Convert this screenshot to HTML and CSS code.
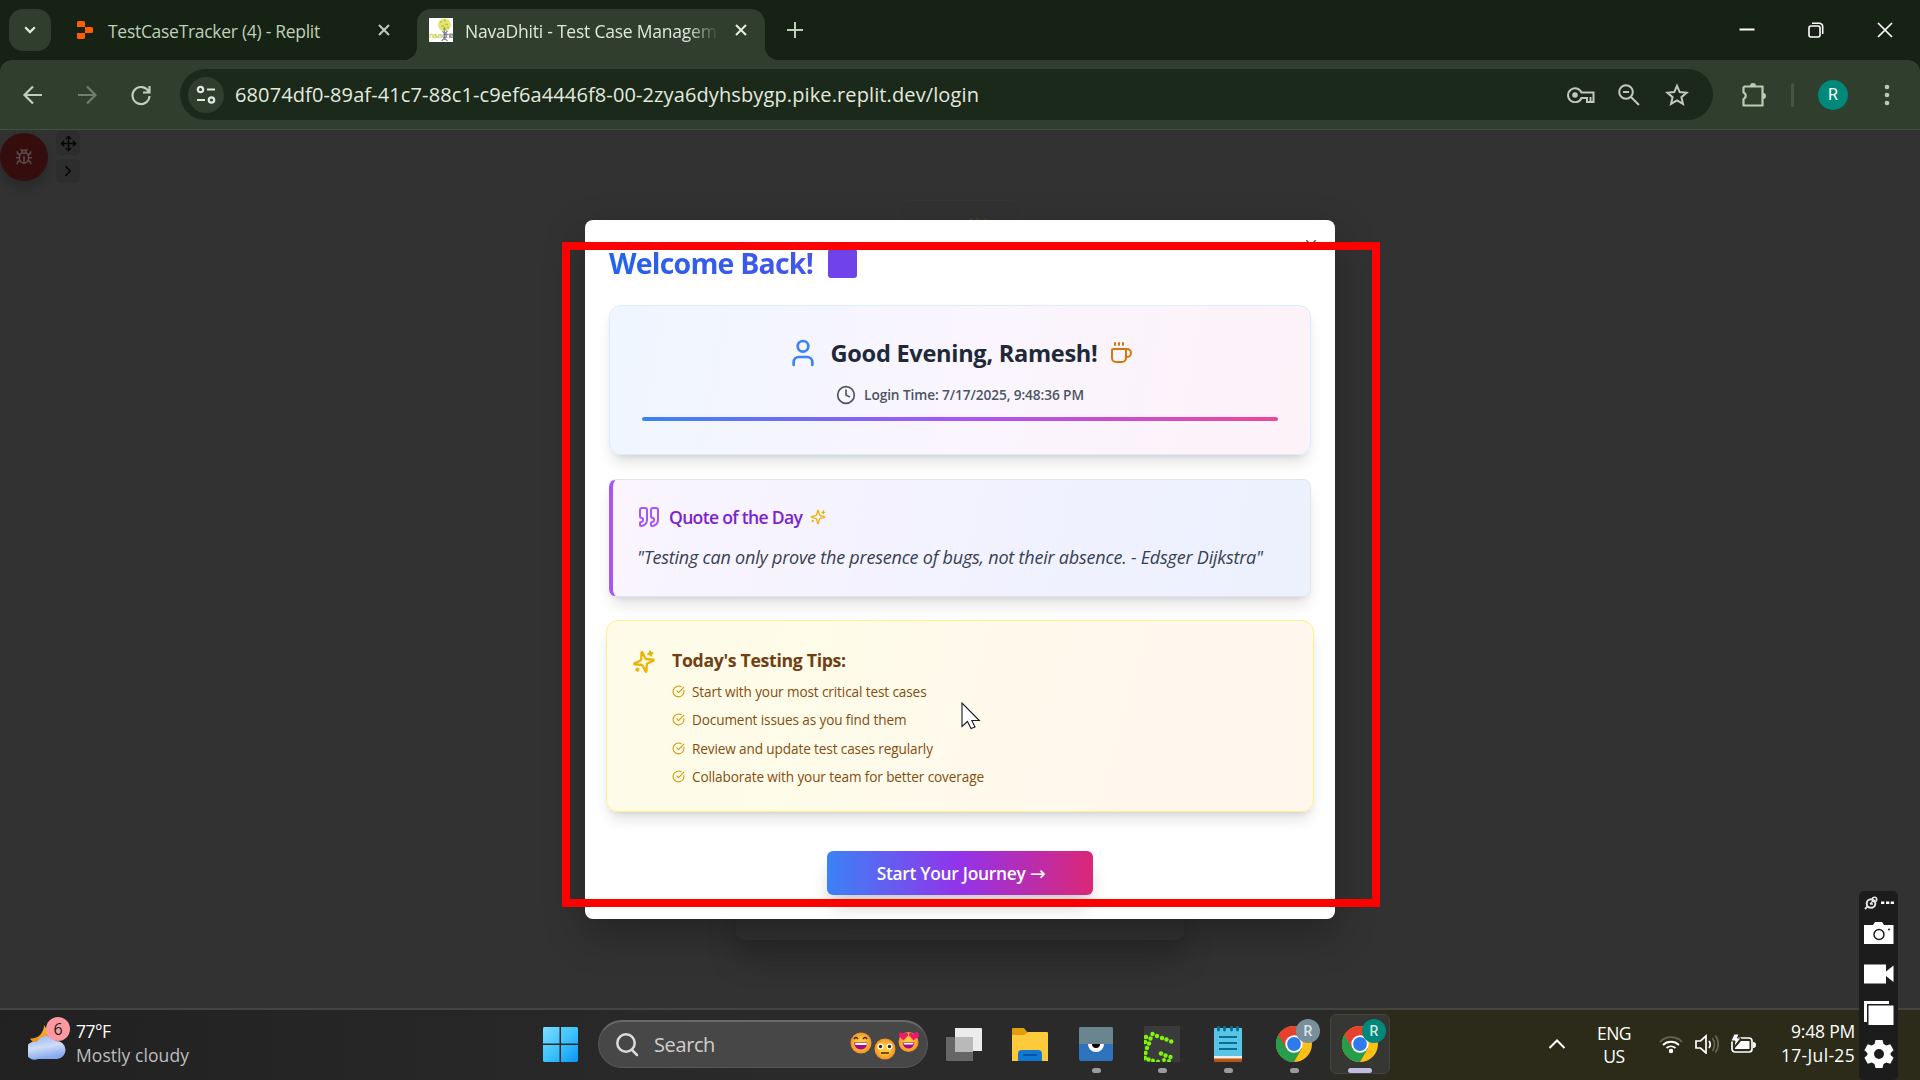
FILE: index.html
```html
<!DOCTYPE html>
<html lang="en">
<head>
<meta charset="utf-8">
<title>NavaDhiti - Test Case Management</title>
<link rel="stylesheet" href="styles.css">
</head>
<body>
<div class="screen">
  <header class="tabstrip">
    <button class="tab-search"><svg width="12" height="8" viewBox="0 0 12 8"><path d="M1.200 1.200 6 6l4.800-4.800" fill="none" stroke="#dfeadb" stroke-width="2.300"/></svg></button>
    <div class="tab">
      <svg class="replit" width="16" height="18" viewBox="0 0 16 18"><path fill="#ff5f00" d="M0 1.500Q0 0 1.500 0H6.500Q8 0 8 1.500V6H0zM8 6h6.500Q16 6 16 7.500v3Q16 12 14.500 12H8zM0 12h8v4.500Q8 18 6.500 18h-5Q0 18 0 16.500z"/></svg>
      <span class="tab-title t-first">TestCaseTracker (4) - Replit</span>
      <svg class="x" width="12" height="12" viewBox="0 0 12 12"><path d="M1 1l10 10M11 1 1 11"/></svg>
    </div>
    <div class="tab active">
      <svg width="24" height="24" viewBox="0 0 24 24"><path fill="#fff" d="M0 0h24v24H0z"/><circle cx="15.500" cy="7" r="6.500" fill="#dfe67e"/><path d="M11 4h2M15 2.500h2M12 8h3M16 6.500h3M14 11h3M18 9.500h2" stroke="#bccb12" stroke-width="1.500"/><path d="M15.500 9v13m0-6-2-3m2 3 3-3m-6 10 3-3 3 3" stroke="#8a8a94" stroke-width="1.200" fill="none"/><text x="0" y="19.500" font-size="8" textLength="13" class="fav" fill="#b9c61d">nava</text><text x="13" y="19.500" font-size="8" textLength="11" class="fav" fill="#666a80">dhiti</text></svg>
      <span class="tab-title">NavaDhiti - Test Case Managem</span>
      <svg class="x" width="12" height="12" viewBox="0 0 12 12"><path d="M1 1l10 10M11 1 1 11"/></svg>
    </div>
    <svg class="plus" width="16" height="16" viewBox="0 0 16 16"><path d="M8 0v16M0 8h16" stroke="#bdd0b8" stroke-width="2"/></svg>
    <div class="winctl">
      <svg width="16" height="16" viewBox="0 0 16 16"><path d="M.500 7.500h15" stroke="#fff" stroke-width="2"/></svg>
      <svg width="16" height="16" viewBox="0 0 16 16" fill="none" stroke="#fff" stroke-width="1.600"><rect x="1" y="4" width="11" height="11" rx="2"/><path d="M4 1.300h7q3.700 0 3.700 3.700v7"/></svg>
      <svg width="16" height="16" viewBox="0 0 16 16"><path d="M1 1l14 14M15 1 1 15" stroke="#fff" stroke-width="1.700"/></svg>
    </div>
  </header>

  <div class="toolbar-wrap">
  <nav class="toolbar">
    <svg class="nav-ic" width="24" height="24" viewBox="0 0 24 24"><path d="M21 12H4M12 3.500 3.500 12l8.500 8.500"/></svg>
    <svg class="nav-ic dim" width="24" height="24" viewBox="0 0 24 24"><path d="M3 12h17M12 3.500l8.500 8.500-8.500 8.500"/></svg>
    <svg class="nav-ic" width="24" height="24" viewBox="0 0 24 24"><path d="M19.500 8.500A8.500 8.500 0 1 0 20.500 13M20.500 3v6.500H14"/></svg>
    <div class="omnibox">
      <span class="site"><svg width="20" height="20" viewBox="0 0 20 20" fill="none" stroke="#dfe8dc" stroke-width="2.200"><circle cx="4.500" cy="4.500" r="2.700"/><path d="M11 4.500h8M1 15h8"/><circle cx="15.500" cy="15" r="2.700"/></svg></span>
      <span class="url">68074df0-89af-41c7-88c1-c9ef6a4446f8-00-2zya6dyhsbygp.pike.replit.dev/login</span>
      <svg class="key" width="28" height="16" viewBox="0 0 28 16" fill="none" stroke="#c3c8bd" stroke-width="2"><path d="M14.500 5.500H26.500V15H20v-4h-5.500A7 7 0 1 1 14.500 5.500z"/><path d="M23.500 10v4"/><circle cx="8" cy="8" r="2.800" fill="#c3c8bd" stroke="none"/></svg>
      <svg class="mag" width="22" height="22" viewBox="0 0 22 22" fill="none" stroke="#c3c8bd" stroke-width="2"><circle cx="8" cy="8" r="6.800"/><path d="M13 13l8 8M5 8h6"/></svg>
      <svg class="star" width="24" height="23" viewBox="0 0 24 23" fill="none" stroke="#c3c8bd" stroke-width="2"><path d="M12 2.800l2.700 6.300 6.900.6-5.200 4.500 1.600 6.700-6-3.600-6 3.600 1.600-6.700L2.400 9.700l6.900-.6z"/></svg>
    </div>
    <svg class="puzzle" width="26" height="26" viewBox="0 0 26 26"><path d="M3.500 4.500H21.500V23.500H2.500V17a3.500 3.500 0 0 0 0-6.500V5.500z" fill="none" stroke="#b9cdb3" stroke-width="2.200" stroke-linejoin="round"/><path d="M9 4a3 3 0 0 1 6 0zM22 11a3 3 0 0 1 0 6z" fill="#b9cdb3"/></svg>
    <span class="sep"></span>
    <span class="avatar">R</span>
    <svg class="dots" width="6" height="22" viewBox="0 0 6 22" fill="#b9cdb3"><circle cx="3" cy="3" r="2.300"/><circle cx="3" cy="11" r="2.300"/><circle cx="3" cy="19" r="2.300"/></svg>
  </nav>
  </div>

  <main class="page">
    <div class="logo-box"></div>
    <svg class="leaf" width="20" height="4" viewBox="0 0 20 4" fill="#4c4c00"><path d="M1 3l3-2v3zM8 0l4 4H9zM16 1l3 2-2 1z"/></svg>
    <div class="login-card"></div>
    <div class="bugbar">
      <span class="bug"><svg width="18" height="18" viewBox="0 0 24 24" class="stroke" stroke="#5f4a4a"><path d="m8 2 1.880 1.880M14.120 3.880 16 2M9 7.130v-1a3.003 3.003 0 1 1 6 0v1M12 20c-3.300 0-6-2.700-6-6v-3a4 4 0 0 1 4-4h4a4 4 0 0 1 4 4v3c0 3.300-2.700 6-6 6M12 20v-9M6.530 9C4.600 8.800 3 7.100 3 5M6 13H2M3 21c0-2.100 1.700-3.900 3.800-4M20.970 5c0 2.100-1.600 3.800-3.500 4M22 13h-4M17.200 17c2.100.1 3.800 1.900 3.800 4"/></svg></span>
      <div class="bug-side">
        <span class="mini"><svg width="17" height="17" viewBox="0 0 24 24" class="stroke" stroke="#050505"><path d="M12 2v20M15 19l-3 3-3-3M19 9l3 3-3 3M2 12h20M5 9l-3 3 3 3M9 5l3-3 3 3"/></svg></span>
        <span class="mini"><svg width="18" height="18" viewBox="0 0 24 24" class="stroke" stroke="#050505"><path d="m9 18 6-6-6-6"/></svg></span>
      </div>
    </div>

    <section class="modal">
      <svg class="close" width="16" height="16" viewBox="0 0 24 24" fill="none" stroke="#555" stroke-width="2"><path d="M5 5l14 14M19 5 5 19"/></svg>
      <h1 class="title"><span>Welcome Back!</span><i class="tofu"></i></h1>
      <article class="card greet">
        <div class="row hello">
          <svg width="32" height="32" viewBox="0 0 24 24" class="stroke" stroke="#3b82f6"><path d="M19 21v-2a4 4 0 0 0-4-4H9a4 4 0 0 0-4 4v2"/><circle cx="12" cy="7" r="4"/></svg>
          <h2>Good Evening, Ramesh!</h2>
          <svg width="24" height="24" viewBox="0 0 24 24" class="stroke" stroke="#d97706"><path d="M10 2v2M14 2v2M16 8a1 1 0 0 1 1 1v8a4 4 0 0 1-4 4H7a4 4 0 0 1-4-4V9a1 1 0 0 1 1-1h14a4 4 0 1 1 0 8h-1M6 2v2"/></svg>
        </div>
        <div class="row when">
          <svg width="20" height="20" viewBox="0 0 24 24" class="stroke" stroke="#4b5563"><circle cx="12" cy="12" r="10"/><path d="M12 6v6l4 2"/></svg>
          <span>Login Time: 7/17/2025, 9:48:36 PM</span>
        </div>
        <div class="bar"></div>
      </article>
      <article class="card quote">
        <div class="row qhead">
          <svg width="24" height="24" viewBox="0 0 24 24" class="stroke" stroke="#a855f7"><path d="M16 3a2 2 0 0 0-2 2v6a2 2 0 0 0 2 2 1 1 0 0 1 1 1v1a2 2 0 0 1-2 2 1 1 0 0 0-1 1v2a1 1 0 0 0 1 1 6 6 0 0 0 6-6V5a2 2 0 0 0-2-2zM5 3a2 2 0 0 0-2 2v6a2 2 0 0 0 2 2 1 1 0 0 1 1 1v1a2 2 0 0 1-2 2 1 1 0 0 0-1 1v2a1 1 0 0 0 1 1 6 6 0 0 0 6-6V5a2 2 0 0 0-2-2z"/></svg>
          <h3>Quote of the Day</h3>
          <svg width="16" height="16" viewBox="0 0 24 24" class="stroke" stroke="#eab308"><path d="M9.937 15.500A2 2 0 0 0 8.500 14.063l-6.135-1.582a.5.5 0 0 1 0-.962L8.500 9.936A2 2 0 0 0 9.937 8.500l1.582-6.135a.5.5 0 0 1 .963 0L14.063 8.500A2 2 0 0 0 15.500 9.937l6.135 1.581a.5.5 0 0 1 0 .964L15.500 14.063a2 2 0 0 0-1.437 1.437l-1.582 6.135a.5.5 0 0 1-.963 0zM20 3v4M22 5h-4M4 17v2M5 18H3"/></svg>
        </div>
        <p class="qtext">"Testing can only prove the presence of bugs, not their absence. - Edsger Dijkstra"</p>
      </article>
      <article class="card tips">
        <svg class="spark" width="24" height="24" viewBox="0 0 24 24" stroke="#eab308"><path d="M9.937 15.500A2 2 0 0 0 8.500 14.063l-6.135-1.582a.5.5 0 0 1 0-.962L8.500 9.936A2 2 0 0 0 9.937 8.500l1.582-6.135a.5.5 0 0 1 .963 0L14.063 8.500A2 2 0 0 0 15.500 9.937l6.135 1.581a.5.5 0 0 1 0 .964L15.500 14.063a2 2 0 0 0-1.437 1.437l-1.582 6.135a.5.5 0 0 1-.963 0zM20 3v4M22 5h-4M4 17v2M5 18H3"/></svg>
        <div class="tips-body">
          <h3>Today's Testing Tips:</h3>
          <ul>
            <li><svg width="13" height="13" viewBox="0 0 24 24" class="stroke" stroke="#d19a0b"><path d="M21.801 10A10 10 0 1 1 17 3.335M9 11l3 3L22 4"/></svg><span>Start with your most critical test cases</span></li>
            <li><svg width="13" height="13" viewBox="0 0 24 24" class="stroke" stroke="#d19a0b"><path d="M21.801 10A10 10 0 1 1 17 3.335M9 11l3 3L22 4"/></svg><span>Document issues as you find them</span></li>
            <li><svg width="13" height="13" viewBox="0 0 24 24" class="stroke" stroke="#d19a0b"><path d="M21.801 10A10 10 0 1 1 17 3.335M9 11l3 3L22 4"/></svg><span>Review and update test cases regularly</span></li>
            <li><svg width="13" height="13" viewBox="0 0 24 24" class="stroke" stroke="#d19a0b"><path d="M21.801 10A10 10 0 1 1 17 3.335M9 11l3 3L22 4"/></svg><span>Collaborate with your team for better coverage</span></li>
          </ul>
        </div>
      </article>
      <button class="cta">Start Your Journey <span class="arrow">→</span></button>
    </section>
    <svg class="cursor" width="20" height="28" viewBox="0 0 20 28"><path d="M1 1v23.500l5.500-5 3.500 7 4-1.500-3.200-6.500h7.500z" fill="#fff" stroke="#1a1a2a" stroke-width="1.100"/></svg>
    <div class="highlight"></div>
  </main>

  <footer class="taskbar">
    <div class="weather">
      <svg width="48" height="44" viewBox="0 0 48 44"><defs><linearGradient id="mo" x2="0" y2="1"><stop stop-color="#f9b932"/><stop offset="1" stop-color="#f08a1c"/></linearGradient><linearGradient id="cl" x2=".3" y2="1"><stop stop-color="#8fb4f5"/><stop offset=".55" stop-color="#cfdcf6"/><stop offset="1" stop-color="#86aaf0"/></linearGradient></defs><path d="M16 9a13 13 0 0 1-14 13.500C5 29 18 30 22 20z" fill="url(#mo)"/><path d="M10 43a9 9 0 1 1-1-17 11 11 0 0 1 19-1 9 9 0 1 1 1 18z" fill="url(#cl)"/><circle cx="30" cy="13" r="12" fill="#ff99a1"/><text x="30" y="18.500" text-anchor="middle" font-size="16" class="sans" fill="#1c1c1c">6</text></svg>
      <div class="wtext"><span class="w1">77°F</span><span class="w2">Mostly cloudy</span></div>
    </div>
    <svg class="win" width="35" height="35" viewBox="0 0 35 35"><defs><linearGradient id="wg" x2="1" y2="1"><stop stop-color="#7fdcff"/><stop offset=".5" stop-color="#3fc4fb"/><stop offset="1" stop-color="#0a95f7"/></linearGradient></defs><path fill="url(#wg)" d="M1 0h15.500v16.500H0V1zM18 0h16l1 1v15.500H18zM0 18h16.500v17H1l-1-1zM18 18h17v16l-1 1H18z"/></svg>
    <div class="search">
      <svg width="24" height="24" viewBox="0 0 24 24" fill="none" stroke="#dcdcdc" stroke-width="2.500" stroke-linecap="round"><circle cx="11" cy="10" r="8.700"/><path d="M17 17l5 5"/></svg>
      <span class="stext">Search</span>
      <svg class="emoji" width="70" height="30" viewBox="0 0 70 30"><defs><radialGradient id="em"><stop offset=".4" stop-color="#ffc83a"/><stop offset="1" stop-color="#f59224"/></radialGradient></defs><circle cx="12" cy="13" r="10.500" fill="url(#em)"/><path d="M5 9q2-3 4 0M14 9q2-3 4 0" stroke="#42210b" stroke-width="1.500" fill="none"/><path d="M5 12.500h13.500q-1 7-6.700 7t-6.800-7z" fill="#a80a8a"/><path d="M6 13h12l-.5 2H6.500z" fill="#fff"/><circle cx="36" cy="19" r="10.500" fill="url(#em)"/><circle cx="31.500" cy="16.500" r="3" fill="#fff"/><circle cx="40.500" cy="16.500" r="3" fill="#fff"/><circle cx="31.500" cy="16.500" r="1.700" fill="#42210b"/><circle cx="40.500" cy="16.500" r="1.700" fill="#42210b"/><path d="M32 23h8" stroke="#42210b" stroke-width="1.500"/><circle cx="59.500" cy="12" r="10" fill="url(#em)"/><path d="M54.500 10.500 50 6q-1-4 2.500-3.500l2 1.500q5-3 4.500 1.500zM64.500 10.500 60 5.500q0-4.500 4-1.500 5-4 5.500 0t-2 4z" fill="#f2186b"/><path d="M53.500 12.500h12q-1 6-6 6t-6-6z" fill="#a80a8a"/><path d="M54.500 13h10l-.5 1.500h-9z" fill="#fff"/></svg>
    </div>
    <div class="apps">
      <span class="app"><svg width="36" height="36" viewBox="0 0 36 36"><path d="M9 2h26q1 0 1 1v22H9z" fill="#ececec"/><path d="M0 11h27v24H1l-1-1z" fill="#666"/><path d="M9 11h18v15H9z" fill="#b9b9b9"/></svg></span>
      <span class="app"><svg width="36" height="36" viewBox="0 0 36 36"><path d="M0 3q0-1 1-1h11l4 5v5H0z" fill="#e09d0c"/><path d="M0 9h12l4-3h19q1 0 1 1v28H0z" fill="#fdca3b"/><path d="M6 35V28q0-4 4-4h16q4 0 4 4v7z" fill="#0e78d4"/><path d="M11 29h14" stroke="#0a4c91" stroke-width="1.600"/></svg></span>
      <span class="app"><svg width="36" height="36" viewBox="0 0 36 36"><rect x="1" y="1" width="34" height="34" rx="2" fill="#2e74bd"/><path d="M1 18V3q0-2 2-2h30q2 0 2 2v15z" fill="#688590"/><path d="M10 18a8 8 0 0 0 16 0z" fill="#fff"/><path d="M14 18a4 4 0 0 0 8 0z" fill="#000"/></svg><i class="dot"></i></span>
      <span class="app"><svg width="36" height="36" viewBox="0 0 36 36"><path fill="#3b3b3b" d="M0 0h36v36H0z"/><g fill="#7ff50a"><circle cx="8.500" cy="8" r="2.200"/><circle cx="13" cy="10" r="2.200"/><circle cx="18" cy="12" r="2.200"/><circle cx="22.500" cy="13.500" r="2.200"/><circle cx="27.200" cy="15.500" r="2.200"/><circle cx="2" cy="11" r="2.200"/><circle cx="6.500" cy="12.500" r="2.200"/><circle cx="5" cy="17.500" r="2.200"/><circle cx="1" cy="16" r="2.200"/><circle cx="3" cy="22" r="2.200"/><circle cx="1.500" cy="27" r="2.200"/><circle cx="1" cy="32" r="2.200"/><circle cx="4.500" cy="33.500" r="2.200"/><circle cx="9" cy="34.500" r="2"/><circle cx="14" cy="35.500" r="2"/><circle cx="17" cy="27.500" r="2.200"/><circle cx="21.500" cy="29.500" r="2.200"/><circle cx="26.500" cy="31" r="2.200"/><circle cx="20" cy="34" r="2"/><circle cx="25" cy="35" r="2"/></g></svg><i class="dot"></i></span>
      <span class="app"><svg width="36" height="36" viewBox="0 0 36 36"><path d="M4 2h28v29H4z" fill="#58c5e6"/><path d="M4 30h28v3H4z" fill="#eee"/><path d="M4 32.500h28V35q0 1-1 1H5q-1 0-1-1z" fill="#b8560f"/><path d="M9 11h18M9 17h18M9 23h18" stroke="#0b6d92" stroke-width="2"/><path d="M8.500 1v3M14.500 1v3M21.500 1v3M27.500 1v3" stroke="#0b6d92" stroke-width="2.800" stroke-linecap="round"/></svg><i class="dot"></i></span>
      <span class="app"><svg width="36" height="36" viewBox="0 0 36 36"><circle cx="18" cy="18" r="18" fill="#fbbf16"/><path d="M18 18 2.400 9A18 18 0 0 0 18 36l7.800-13.500z" fill="#279c4b"/><path d="M2.400 9 10.200 22.500 18 9.500h15.800A18 18 0 0 0 2.400 9z" fill="#e8402f"/><circle cx="18" cy="18" r="8.700" fill="#fff"/><circle cx="18" cy="18" r="6.900" fill="#2f7bee"/></svg><b class="bdg gray">R</b><i class="dot"></i></span>
      <span class="app on"><svg width="36" height="36" viewBox="0 0 36 36"><circle cx="18" cy="18" r="18" fill="#fbbf16"/><path d="M18 18 2.400 9A18 18 0 0 0 18 36l7.800-13.500z" fill="#279c4b"/><path d="M2.400 9 10.200 22.500 18 9.500h15.800A18 18 0 0 0 2.400 9z" fill="#e8402f"/><circle cx="18" cy="18" r="8.700" fill="#fff"/><circle cx="18" cy="18" r="6.900" fill="#2f7bee"/></svg><b class="bdg">R</b><i class="dot long"></i></span>
    </div>
    <div class="tray">
      <svg class="chev" width="18" height="12" viewBox="0 0 18 12"><path d="M1.500 10 9 2.500l7.500 7.500" fill="none" stroke="#fff" stroke-width="2"/></svg>
      <div class="lang"><span>ENG</span><span>US</span></div>
      <svg class="wifi" width="24" height="20" viewBox="0 0 24 20" fill="none" stroke="#fff" stroke-width="1.800"><path d="M1 8a15 15 0 0 1 22 0" stroke="#666552"/><path d="M4 11a11.500 11.500 0 0 1 16 0M7.500 14a7 7 0 0 1 9 0"/><circle cx="12" cy="17" r="2.200" fill="#fff" stroke="none"/></svg>
      <svg class="vol" width="24" height="20" viewBox="0 0 24 20" fill="none" stroke="#fff" stroke-width="1.700"><path d="M1 7h4.500L11 2v17l-5.500-5H1zM14 7q2.500 3.500 0 7"/><path d="M17.500 4q4 6.500 0 13M20.500 1.500q5.500 8.500 0 17" stroke="#666552"/></svg>
      <svg class="bat" width="25" height="20" viewBox="0 0 25 20"><rect x="1" y="4" width="20" height="14" rx="3" fill="none" stroke="#fff" stroke-width="1.700"/><path d="M4 14l6-7h8.500v8H4zM22 8q3 0 3 3t-3 3z" fill="#fff"/><path d="M3 0h5L6.500 4H10l-7 9 1-6H0z" fill="#fff" stroke="#2b2a19" stroke-width="1"/></svg>
      <div class="clock"><span class="c1">9:48 PM</span><span class="c2">17-Jul-25</span></div>
    </div>
  </footer>

  <aside class="recorder">
    <svg width="30" height="14" viewBox="0 0 30 14"><path d="M1 13l3-3" stroke="#ddd" stroke-width="2"/><circle cx="7" cy="7.500" r="4.300" fill="none" stroke="#e6e6e6" stroke-width="2"/><circle cx="10.500" cy="3.500" r="2.200" fill="none" stroke="#e6e6e6" stroke-width="1.600"/><path d="M6 8l3-3M6 8h3" stroke="#e6e6e6" stroke-width="1.300"/><path d="M17 5.500h3.300V8H17zM22 5.500h3.300V8H22zM26.700 5.500H30V8h-3.300z" fill="#fff"/></svg>
    <svg width="30" height="22" viewBox="0 0 30 22"><path d="M0 3h9l2-3h7l2 3h9.500v19H0z" fill="#fff"/><circle cx="15" cy="12.500" r="5" fill="none" stroke="#1c1c1c" stroke-width="1.500"/><circle cx="25" cy="7.500" r="1" fill="#1c1c1c"/></svg>
    <svg width="30" height="20" viewBox="0 0 30 20"><path d="M0 .500h22v7l7.500-6v16.500l-7.500-6V19.500H0z" fill="#fff"/></svg>
    <svg width="30" height="24" viewBox="0 0 30 24"><path d="M0 0h25v3H3v18H0zM4.500 4.500h25V24h-25z" fill="#fff"/></svg>
    <svg width="30" height="30" viewBox="0 0 30 30"><path fill="#fff" fill-rule="evenodd" d="M11.500 1h7l1 4 2.800 1.600 4-1.300 3.300 6-3 2.700v2l3 2.700-3.300 6-4-1.300-2.800 1.600-1 4h-7l-1-4-2.800-1.600-4 1.300-3.300-6 3-2.700v-2l-3-2.700 3.300-6 4 1.300L10.500 5zM15 10a5 5 0 1 0 0 10 5 5 0 0 0 0-10z"/></svg>
  </aside>
</div>
</body>
</html>
```
FILE: styles.css
```css
* { box-sizing: border-box; }
body { margin: 0; background: #323232; font-family: "Open Sans", "Noto Sans", sans-serif; overflow: hidden; }
h1, h2, h3, p, ul { margin: 0; padding: 0; }
button { border: 0; padding: 0; font-family: inherit; }
svg { display: block; flex: none; }
span { white-space: nowrap; }
.screen { width: 1920px; height: 1080px; display: flex; flex-direction: column; position: relative; }
.stroke { fill: none; stroke-width: 2; stroke-linecap: round; stroke-linejoin: round; }
.sans, .fav { font-family: "Open Sans", sans-serif; }

/* tab strip */
.tabstrip { height: 60px; background: #162213; display: flex; padding-left: 9px; align-items: center; flex: none; }
.tab-search { width: 42px; height: 42px; border-radius: 14px; background: #2f3e2d; display: grid; place-items: center; }
.tab { width: 366px; height: 51px; margin-top: 9px; padding: 0 27px 9px 26px; display: flex; align-items: center; color: #bdd0b8; font-size: 17.5px; letter-spacing: -.22px; }
.tab-title { flex: 1; margin-left: 15px; padding-top: 2px; line-height: 24px; }
.t-first { letter-spacing: -.29px; }
.x { stroke: #bdd0b8; stroke-width: 2; }
.tab.active { width: 348px; padding: 0 18px 9px 12px; background: #2f3e2d; border-radius: 14px 14px 0 0; color: #dfe8dc; position: relative; }
.active .tab-title { margin-left: 12px; margin-right: 18px; mask-image: linear-gradient(90deg, #000 88%, transparent 101%); }
.active .x { stroke: #e6ede3; }
.tab.active::before, .tab.active::after { content: ""; position: absolute; bottom: 0; width: 14px; height: 14px; }
.tab.active::before { left: -14px; background: radial-gradient(circle at 0 0, #162213 14px, #2f3e2d 14.5px); }
.tab.active::after { right: -14px; background: radial-gradient(circle at 100% 0, #162213 14px, #2f3e2d 14.5px); }
.plus { margin-left: 22px; }
.winctl { margin-left: auto; display: flex; gap: 53px; padding-right: 27px; }

/* toolbar */
.toolbar-wrap { background: #162213; flex: none; }
.toolbar { height: 70px; background: #2f3e2d; border-bottom: 1px solid #40523c; border-radius: 12px 12px 0 0; display: flex; align-items: center; padding: 0 30px 0 21px; }
.nav-ic { fill: none; stroke: #bdd0b8; stroke-width: 2.2; margin-right: 30px; }
.nav-ic.dim { stroke: #6f7f6b; }
.nav-ic:nth-child(3) { margin-right: 27px; }
.omnibox { width: 1533px; height: 51px; border-radius: 26px; background: #1b291a; display: flex; align-items: center; padding-left: 8px; }
.site { width: 36px; height: 36px; border-radius: 50%; background: #2f3e2d; display: grid; place-items: center; }
.url { flex: 1; margin-left: 11px; font-size: 20px; line-height: 28px; letter-spacing: .114px; color: #e3e9df; }
.key { margin-right: 23px; }
.mag { margin-right: 25px; }
.star { margin-right: 24px; }
.puzzle { margin-left: 28px; }
.sep { width: 3px; height: 24px; border-radius: 2px; background: #445740; margin-left: 24px; }
.avatar { width: 30px; height: 30px; border-radius: 50%; background: #00897b; color: #fff; font: 16px/30px Roboto, sans-serif; text-align: center; margin-left: 24px; }
.dots { margin-left: auto; }

/* dimmed page */
.page { height: 878px; flex: none; background: #323232; position: relative; padding-top: 90px; }
.logo-box { position: absolute; left: 897px; top: 70px; width: 126px; height: 40px; border-radius: 12px; border: 1px solid #363636; }
.leaf { position: absolute; left: 968px; top: 87px; }
.login-card { position: absolute; left: 736px; top: 700px; width: 448px; height: 110px; border-radius: 8px; background: #323232; box-shadow: 0 20px 30px rgba(0,0,0,.18); }
.bugbar { position: absolute; left: 0; top: 1px; display: flex; gap: 8px; }
.bug { width: 48px; height: 48px; margin-top: 2px; border-radius: 50%; background: #360d0d; display: grid; place-items: center; box-shadow: 0 6px 12px rgba(0,0,0,.2); }
.bug-side { display: flex; flex-direction: column; gap: 4px; }
.mini { width: 24px; height: 24px; border-radius: 5px; background: #2d2d2d; display: grid; place-items: center; }

.modal { position: relative; width: 750px; height: 699px; margin: 0 auto; background: #fff; border-radius: 8px; padding: 24px; display: flex; flex-direction: column; box-shadow: 0 15px 40px rgba(0,0,0,.28); }
.close { position: absolute; right: 16px; top: 17px; }
.title { height: 37px; padding-top: 1px; font-size: 28.5px; line-height: 36px; letter-spacing: -.8px; font-weight: 700; display: flex; align-items: center; color: transparent; background: linear-gradient(90deg, #2563eb, #9333ea); -webkit-background-clip: text; background-clip: text; }
.tofu { width: 29px; height: 29px; margin-left: 15px; border-radius: 3px; background: #6f43e9; }
.card { box-shadow: 0 10px 15px -3px rgba(0,0,0,.12), 0 4px 6px -4px rgba(0,0,0,.12); }
.row { display: flex; align-items: center; }
.greet { margin-top: 24px; height: 150px; border: 1px solid #dbeafe; border-radius: 12px; padding: 31px 32px; background: linear-gradient(100deg, #eff6ff, #faf5ff 50%, #fdf2f8); }
.hello { height: 32px; justify-content: center; gap: 12px; }
.hello h2 { font-size: 23.6px; line-height: 32px; letter-spacing: -.3px; color: #1f2937; white-space: nowrap; }
.when { height: 20px; margin-top: 16px; justify-content: center; gap: 8px; font-size: 13.7px; line-height: 20px; letter-spacing: -.1px; font-weight: 600; color: #4b5563; }
.bar { margin-top: 12px; height: 4px; border-radius: 2px; background: linear-gradient(90deg, #3b82f6, #a855f7 50%, #ec4899); }
.quote { margin-top: 24px; height: 118px; border: 1px solid #e2e4ef; border-left: 4px solid #a855f7; border-radius: 8px; padding: 23px; background: linear-gradient(100deg, #faf5ff, #f0f1ff 65%, #ecf1fe); }
.qhead { height: 28px; gap: 8px; padding-left: 1px; }
.qhead h3 { font-size: 17.6px; line-height: 28px; letter-spacing: -.7px; font-weight: 600; color: #7e22ce; white-space: nowrap; }
.qtext { margin: 10px 0 0 1px; font-size: 18px; line-height: 32px; letter-spacing: -.215px; font-style: italic; color: #374151; white-space: nowrap; }
.tips { margin: 23px -3px 0; height: 192px; border: 1px solid #fef08a; border-radius: 12px; padding: 25px; display: flex; background: linear-gradient(105deg, #fefce8 20%, #fff7ed 75%); }
.spark { margin-top: 4px; fill: none; stroke-width: 2.3; stroke-linecap: round; transform: rotate(-12deg); }
.tips-body { margin-left: 16px; }
.tips h3 { font-size: 17.7px; line-height: 28px; letter-spacing: -.33px; font-weight: 700; color: #713f12; }
.tips ul { list-style: none; margin-top: 8px; display: flex; flex-direction: column; gap: 8.4px; }
.tips li { display: flex; align-items: center; gap: 7px; font-size: 13.6px; line-height: 20px; letter-spacing: -.12px; color: #854d0e; height: 20px; }
.tips li svg { margin-bottom: 1px; }
.cta { align-self: center; width: 266px; height: 44px; margin-top: 39px; padding-left: 2px; border-radius: 6px; background: linear-gradient(90deg, #3b82f6, #9333ea 50%, #db2777); color: #fff; font-size: 17.4px; font-weight: 600; line-height: 45px; letter-spacing: -.3px; box-shadow: 0 10px 15px -3px rgba(0,0,0,.12), 0 18px 25px -5px rgba(0,0,0,.1); }
.arrow { font: 400 19px/20px "DejaVu Sans", sans-serif; }
.cursor { position: absolute; left: 961px; top: 572px; }
.highlight { position: absolute; left: 562px; top: 112px; width: 818px; height: 665px; border: 8px solid #f00; }

/* taskbar */
.taskbar { height: 72px; flex: none; border-top: 2px solid #444440; background: linear-gradient(90deg, #212121, #262626 20%, #2a2a2a 40%, #2a2a2b 68%, #2c2b19 73%, #2c2b19); display: flex; align-items: center; padding-bottom: 2px; }
.weather { width: 515px; margin-left: 28px; display: flex; align-items: flex-start; height: 56px; }
.wtext { display: flex; flex-direction: column; margin-top: 3px; color: #fff; font-size: 17.5px; line-height: 24px; }
.w1 { letter-spacing: -.5px; }
.w2 { color: #bdbdbd; letter-spacing: .07px; }
.search { margin-left: 20px; width: 330px; height: 48px; border-radius: 24px; background: #474747; border: 1px solid #575757; border-top: 2px solid #696969; display: flex; align-items: center; padding: 0 8px 0 16px; }
.stext { flex: 1; margin-left: 15px; font-size: 20px; line-height: 28px; letter-spacing: -.39px; color: #cfcfcf; }
.apps { display: flex; margin-left: 3px; }
.app { width: 60px; height: 60px; margin: 0 3px; display: grid; place-items: center; position: relative; border-radius: 6px; }
.app.on { background: #363632; border: 1px solid #434340; }
.dot { position: absolute; bottom: 1px; left: 50%; width: 9px; height: 5px; margin-left: -4px; border-radius: 3px; background: #9b9b9b; }
.dot.long { width: 24px; margin-left: -12px; bottom: 0; background: #c3bce2; }
.bdg { position: absolute; right: 4px; top: 5px; width: 24px; height: 24px; border-radius: 50%; background: #00897b; color: #cfe6e3; font: 500 14px/24px Roboto, sans-serif; text-align: center; }
.app.on .bdg { top: 4px; right: 3px; }
.bdg.gray { background: #78909c; color: #dce3e6; }
.tray { display: flex; align-items: center; margin-left: 155px; color: #fff; font-size: 17.5px; line-height: 23px; }
.lang { width: 36px; margin: 2px 0 0 30px; display: flex; flex-direction: column; align-items: center; letter-spacing: -.55px; }
.wifi { margin-left: 27px; }
.vol { margin-left: 12px; }
.bat { margin-left: 12px; }
.clock { width: 99px; display: flex; flex-direction: column; align-items: flex-end; line-height: 24px; margin-bottom: 2px; }
.c1 { letter-spacing: -.2px; }
.c2 { letter-spacing: .32px; }

/* floating recorder */
.recorder { position: absolute; left: 1859px; top: 891px; width: 39px; height: 189px; border-radius: 5px; background: #1c1c1c; display: flex; flex-direction: column; align-items: center; padding-top: 5px; }
.recorder svg:nth-child(2) { margin-top: 12px; }
.recorder svg:nth-child(3) { margin-top: 20px; }
.recorder svg:nth-child(4) { margin-top: 17px; }
.recorder svg:nth-child(5) { margin-top: 14px; }
```
